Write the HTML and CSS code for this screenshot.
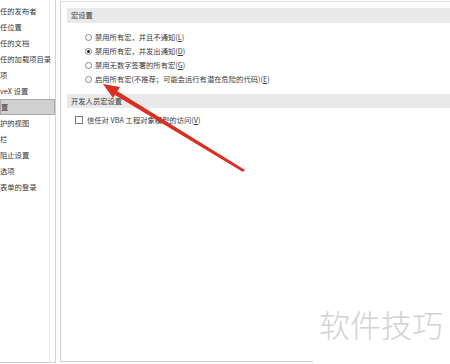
FILE: index.html
```html
<!DOCTYPE html>
<html lang="zh">

<head>
    <meta charset="utf-8">
    <title>宏设置</title>
    <link rel="stylesheet" href="styles.css">
</head>

<body>

    <div class="vindue">

        <nav class="menu">
            <div class="punkt">任的发布者</div>
            <div class="punkt">任位置</div>
            <div class="punkt">任的文档</div>
            <div class="punkt">任的加载项目录</div>
            <div class="punkt">项</div>
            <div class="punkt">veX 设置</div>
            <div class="punkt punkt_aktiv">置</div>
            <div class="punkt">护的视图</div>
            <div class="punkt">栏</div>
            <div class="punkt">阻止设置</div>
            <div class="punkt">选项</div>
            <div class="punkt">表单的登录</div>
        </nav>

        <main class="indhold">

            <h2 class="overskrift">宏设置</h2>

            <div class="valg">
                <label class="linje"><span class="radio"></span>禁用所有宏，并且不通知(<u>L</u>)</label>
                <label class="linje"><span class="radio radio_valgt"></span>禁用所有宏，并发出通知(<u>D</u>)</label>
                <label class="linje"><span class="radio"></span>禁用无数字签署的所有宏(<u>G</u>)</label>
                <label class="linje"><span class="radio"></span>启用所有宏(不推荐；可能会运行有潜在危险的代码)(<u>E</u>)</label>
            </div>

            <h2 class="overskrift overskrift_2">开发人员宏设置</h2>

            <label class="linje boks_linje"><span class="boks"></span>信任对 VBA 工程对象模型的访问(<u>V</u>)</label>

        </main>

    </div>

    <!-- pil oven på skærmbilledet -->
    <svg class="pil" width="450" height="364" viewBox="0 0 450 364">
        <polygon points="117,91 245,170 243,172 115,95" fill="#dc2d22"/>
        <polygon points="103,84 120,87 113,98" fill="#dc2d22"/>
    </svg>

    <div class="vandmaerke">软件技巧</div>

</body>

</html>
```

FILE: styles.css
```css
* {
    box-sizing: border-box;
}

body {
    margin: 0;
    width: 450px;
    height: 364px;
    overflow: hidden;
    background-color: white;
    font-family: "Noto Sans CJK SC", "Noto Sans", sans-serif;
    font-size: 7.3px;
    color: #3a3a3a;
    position: relative;
}

.vindue {
    display: flex;
    height: 364px;
}

.menu {
    width: 56px;
    height: 363px;
    padding-top: 3px;
    border-right: 1px solid #d2d2d2;
    border-bottom: 1px solid #cfcfcf;
    box-shadow: inset -5px 0 0 #fff, inset -6px 0 0 #ececec;
}

.punkt {
    height: 16px;
    line-height: 16px;
    white-space: nowrap;
    overflow: hidden;
}

.punkt_aktiv {
    background-color: #d0d0d0;
    border: 1px solid #a8a8a8;
    line-height: 14px;
}

.indhold {
    flex: 1;
    margin-left: 4px;
    margin-top: 1px;
    height: 361px;
    border-left: 1px solid #d0d0d0;
    border-top: 1px solid #dcdcdc;
    border-bottom: 1px solid #cfcfcf;
    padding: 6px 0 0 6px;
}

.overskrift {
    margin: 0;
    height: 15px;
    line-height: 15px;
    padding-left: 4px;
    font-size: 7.3px;
    font-weight: normal;
    background-color: #e9e9e9;
}

.overskrift_2 {
    margin-top: 8px;
    height: 14px;
    line-height: 14px;
}

.valg {
    margin-top: 7px;
    padding-left: 18px;
}

.linje {
    display: flex;
    align-items: center;
    height: 14px;
    white-space: nowrap;
}

.radio {
    width: 7px;
    height: 7px;
    border: 1px solid #8a8a8a;
    border-radius: 50%;
    margin-right: 3px;
    display: flex;
    align-items: center;
    justify-content: center;
}

.radio_valgt::after {
    content: "";
    width: 3px;
    height: 3px;
    border-radius: 50%;
    background-color: #222;
}

.boks_linje {
    margin-top: 5px;
    padding-left: 8px;
}

.boks {
    width: 8px;
    height: 8px;
    border: 1px solid #7a7a7a;
    margin-right: 4px;
}

.pil {
    position: absolute;
    top: 0;
    left: 0;
}

.vandmaerke {
    position: absolute;
    left: 313px;
    top: 304px;
    width: 137px;
    height: 60px;
    padding-left: 6px;
    background-color: white;
    font-size: 31px;
    font-weight: 300;
    line-height: 40px;
    color: #d2d2d2;
}
```
